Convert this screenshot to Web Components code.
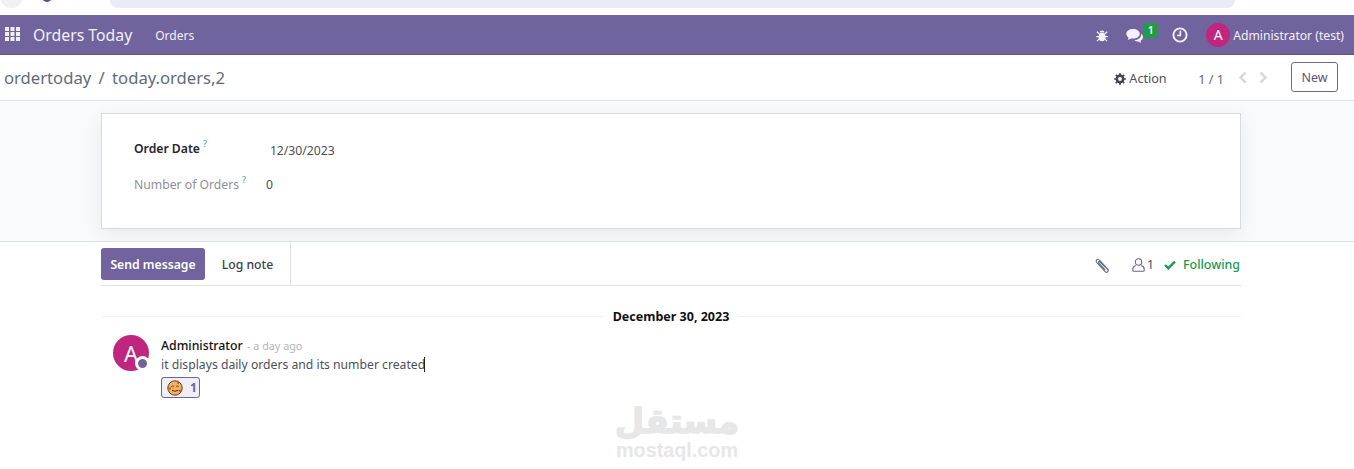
<!DOCTYPE html>
<html>
<head>
<meta charset="utf-8">
<title>Orders Today</title>
<style>
  html, body { margin: 0; height: 100%; background: #fff; overflow: hidden; }
  body { font: 13px "Noto Sans", sans-serif; color: #4c4c4c; display: flex; flex-direction: column; height: 469px; position: relative; }
</style>
</head>
<body>
<browser-strip></browser-strip>
<app-navbar></app-navbar>
<control-panel></control-panel>
<form-sheet></form-sheet>
<chatter-panel></chatter-panel>
<water-mark></water-mark>

<script>
class BaseElement extends HTMLElement {
    connectedCallback() {
        const template = document.createElement('template');
        template.innerHTML = `<style>${this.styles()}</style>${this.markup()}`;
        this.attachShadow({ mode: 'open' });
        this.shadowRoot.appendChild(template.content.cloneNode(true));
    }
    styles() { return ''; }
    markup() { return ''; }
}

class BrowserStrip extends BaseElement {
    styles() {
        return `
            :host { display: block; height: 15px; background: #fff; position: relative; overflow: hidden; flex: none; }
            .wrap { display: flex; height: 8px; }
            .round { width: 23px; height: 23px; margin-top: -15px; border-radius: 50%; background: #f1f1f3; flex: none; }
            .fav { width: 10px; height: 10px; margin: -8px 0 0 19px; border-radius: 50%; background: #6b3f8f; flex: none; }
            .bar { flex: none; width: 1125px; margin-left: 58px; height: 8px; background: #e9ecf6; border-radius: 0 0 14px 14px; }
        `;
    }
    markup() {
        return `<div class="wrap"><span class="round"></span><span class="fav"></span><span class="bar"></span></div>`;
    }
}

class AppNavbar extends BaseElement {
    styles() {
        return `
            :host { display: flex; align-items: center; height: 38px; padding: 1px 10px 0 5px; border-bottom: 1px solid #5f5288; background: #71639e; color: #fff; flex: none; }
            .apps { width: 15px; height: 14px; margin-top: -2px; flex: none; }
            .brand { font-size: 15.8px; margin-left: 13px; color: #f2f0f7; }
            .menu { font-size: 12px; margin-left: 23px; color: #f2f0f7; }
            .spacer { flex: 1; }
            .tray { display: flex; align-items: center; }
            .bug { width: 12px; height: 13px; }
            .msgs { position: relative; width: 18px; height: 15px; margin-left: 18px; }
            .msgs svg { display: block; width: 18px; height: 15px; }
            .badge { position: absolute; left: 17px; top: -5px; width: 15px; height: 15px; background: #1f9d45; border-radius: 3px; font-size: 10.5px; font-weight: 600; line-height: 14px; text-align: center; color: #fff; }
            .clock { width: 16px; height: 16px; margin-left: 28px; }
            .avatar { width: 24px; height: 24px; border-radius: 50%; background: #c0267e; margin-left: 18px; font-size: 14px; line-height: 24px; text-align: center; color: #fff; }
            .user { font-size: 12.15px; margin-left: 3px; color: #f2f0f7; }
        `;
    }
    markup() {
        return `
            <svg class="apps" viewBox="0 0 15 14" fill="#f1eff6">
                <rect x="0" y="0" width="4" height="4"/><rect x="5.5" y="0" width="4" height="4"/><rect x="11" y="0" width="4" height="4"/>
                <rect x="0" y="5" width="4" height="4"/><rect x="5.5" y="5" width="4" height="4"/><rect x="11" y="5" width="4" height="4"/>
                <rect x="0" y="10" width="4" height="4"/><rect x="5.5" y="10" width="4" height="4"/><rect x="11" y="10" width="4" height="4"/>
            </svg>
            <span class="brand">Orders Today</span>
            <span class="menu">Orders</span>
            <span class="spacer"></span>
            <div class="tray">
                <svg class="bug" viewBox="0 0 12 13" fill="#f4f2f8">
                    <ellipse cx="6" cy="7.8" rx="3.5" ry="4.4"/>
                    <path d="M3.4 3.2a2.7 2.4 0 0 1 5.2 0z"/>
                    <path d="M.8 2.8l2.4 1.9M11.200 2.800l-2.400 1.900M.2 7.600h3M11.800 7.600h-3M1 12.200l2.400-2.500M11 12.200l-2.400-2.500" stroke="#f4f2f8" stroke-width="1.200" fill="none"/>
                </svg>
                <span class="msgs">
                    <svg viewBox="0 0 18 15" fill="#f4f2f8">
                        <path d="M7 1C3.200 1 .3 3.100 .3 5.800c0 1.500 .9 2.800 2.300 3.700L1.800 12l3-1.600c.7 .1 1.400 .2 2.200 .2 3.800 0 6.700-2.100 6.700-4.800S10.800 1 7 1z"/>
                        <path d="M15 5.500c.2 .4 .2 .8 .2 1.200 0 2.900-3 5.200-6.800 5.400 1 1 2.400 1.500 4 1.500l2.700 1.300-.6-2.200c1.600-.8 2.500-2 2.500-3.400 0-1.600-.8-2.900-2-3.800z"/>
                    </svg>
                    <span class="badge">1</span>
                </span>
                <svg class="clock" viewBox="0 0 16 16" fill="none" stroke="#f4f2f8">
                    <circle cx="8" cy="8" r="6.600" stroke-width="1.900"/>
                    <path d="M8.300 3.800v4.700H5" stroke-width="1.700"/>
                </svg>
                <span class="avatar">A</span>
                <span class="user">Administrator (test)</span>
            </div>
        `;
    }
}

class ControlPanel extends BaseElement {
    styles() {
        return `
            :host { display: flex; align-items: center; height: 45px; border-bottom: 1px solid #dee2e6; background: #fff; flex: none; padding: 0 16px 0 4px; color: #4c4c4c; }
            .crumbs { font-size: 16.65px; color: #5f6b7a; }
            .crumbs i { font-style: normal; margin: 0 3px; }
            .spacer { flex: 1; }
            .action { display: flex; align-items: center; gap: 3px; font-size: 12.6px; color: #4a4f59; margin-top: 2px; }
            .gear { width: 12px; height: 12px; }
            .pager { font-size: 12.7px; color: #666a73; margin-left: 31.5px; margin-top: 2px; }
            .arrow { width: 10px; height: 13px; margin-left: 14px; }
            .arrow + .arrow { margin-left: 10px; }
            .new { box-sizing: border-box; width: 47px; height: 30px; margin-left: 23px; margin-top: -1px; border: 1px solid #71639e; border-radius: 3px; background: #fff; font: 12.5px "Noto Sans", sans-serif; color: #5b5677; padding: 0; }
        `;
    }
    markup() {
        return `
            <span class="crumbs">ordertoday <i>/</i> today.orders,2</span>
            <span class="spacer"></span>
            <span class="action">
                <svg class="gear" viewBox="0 0 12 12" fill="none" stroke="#3f4450">
                    <circle cx="6" cy="6" r="3.200" stroke-width="2.400"/>
                    <path d="M6 .2v2M6 9.800v2M.2 6h2M9.800 6h2M1.900 1.900l1.400 1.400M8.700 8.700l1.400 1.400M1.900 10.100l1.400-1.400M8.700 3.300l1.400-1.400" stroke-width="1.700"/>
                </svg>
                Action
            </span>
            <span class="pager">1 / 1</span>
            <svg class="arrow" viewBox="0 0 10 13" fill="none" stroke="#d4d6da" stroke-width="2.400"><path d="M7.500 1.500L2.500 6.500l5 5"/></svg>
            <svg class="arrow" viewBox="0 0 10 13" fill="none" stroke="#d4d6da" stroke-width="2.400"><path d="M2.500 1.500l5 5-5 5"/></svg>
            <button class="new">New</button>
        `;
    }
}

class FormField extends BaseElement {
    styles() {
        const strong = this.hasAttribute('strong');
        return `
            :host { display: flex; align-items: flex-start; position: relative; }
            .label { font-size: 12.2px; font-weight: ${strong ? 600 : 400}; color: ${strong ? '#1f2430' : '#8f8f96'}; }
            sup { font-size: 9px; font-weight: 400; color: #3a9bd1; line-height: 0; margin-left: 3px; vertical-align: 6px; }
            .value { font-size: 12.2px; color: #4c4f59; margin-left: var(--gap); padding-top: var(--drop, 0); }
        `;
    }
    markup() {
        return `<span class="label"><slot name="label"></slot><sup>?</sup></span><span class="value"><slot name="value"></slot></span>`;
    }
}

class FormSheet extends BaseElement {
    styles() {
        return `
            :host { display: block; height: 141px; background: #f9fafb; border-bottom: 1px solid #dee2e6; flex: none; padding: 12px 113px 0 101px; box-sizing: border-box; }
            .sheet { box-sizing: border-box; height: 116px; background: #fff; border: 1px solid #d8dade; box-shadow: 0 5px 18px rgba(0,0,0,.07); padding: 26px 32px 0; display: flex; flex-direction: column; gap: 17px; }
        `;
    }
    markup() {
        return `
            <div class="sheet">
                <form-field strong style="--gap:63px;--drop:2px"><span slot="label">Order Date</span><span slot="value">12/30/2023</span></form-field>
                <form-field style="--gap:20px"><span slot="label">Number of Orders</span><span slot="value">0</span></form-field>
            </div>
        `;
    }
}

class ChatterPanel extends BaseElement {
    styles() {
        return `
            :host { display: block; padding: 0 113px 0 101px; background: #fff; flex: 1; min-height: 0; }
            .top { display: flex; align-items: stretch; height: 43px; border-bottom: 1px solid #dee0e6; }
            .send { box-sizing: border-box; height: 32px; margin-top: 6px; width: 104px; background: #71639e; border: 0; border-radius: 3px; color: #fff; font: 600 12.2px "Noto Sans", sans-serif; padding: 0; }
            .log { box-sizing: border-box; width: 86px; border-right: 1px solid #dee0e6; text-align: center; font-size: 12.2px; font-weight: 500; color: #3a3f4a; line-height: 45px; }
            .spacer { flex: 1; }
            .tools { display: flex; align-items: center; padding: 2px 1px 0 0; color: #4a4f59; }
            .clip { width: 15px; height: 16px; }
            .person { width: 13px; height: 14px; margin-left: 22px; }
            .count { font-size: 12.2px; margin-left: 2px; }
            .check { width: 12px; height: 10px; margin-left: 10px; }
            .following { font-size: 12.4px; font-weight: 500; color: #1a9a4b; margin-left: 7px; }
            .date { display: flex; align-items: center; margin-top: 20px; height: 20px; font-size: 12.5px; font-weight: 700; color: #111; }
            .date::before, .date::after { content: ""; flex: 1; height: 1px; background: #f0f1f3; }
            .date span { padding: 0 9px; }
            .message { display: flex; padding: 9px 0 0 12px; }
            .avatar { position: relative; width: 36px; height: 36px; border-radius: 50%; background: #c0267e; color: #fff; font-size: 22px; line-height: 36px; text-align: center; flex: none; }
            .status { position: absolute; right: -1px; bottom: 0; width: 9px; height: 9px; background: #71639e; border: 3px solid #fff; border-radius: 50%; }
            .body { margin-left: 12px; padding-top: 1px; }
            .head { font-size: 12.3px; font-weight: 500; color: #111; line-height: 20px; }
            .ago { font-size: 10.8px; font-weight: 400; color: #b5b5ba; margin-left: 1px; }
            .text { font-size: 12.2px; color: #4c4f59; line-height: 18px; }
            .caret { display: inline-block; width: 1px; height: 15px; background: #222; vertical-align: -3px; margin-left: -1px; }
            .reaction { display: flex; align-items: center; box-sizing: border-box; width: 39px; height: 21px; margin-top: 3px; border: 1px solid #71639e; border-radius: 3px; background: #f0eff6; padding-left: 5px; font-size: 12.2px; font-weight: 700; color: #71639e; }
            .emoji { width: 16px; height: 16px; flex: none; }
            .num { margin-left: 7px; }
        `;
    }
    markup() {
        return `
            <div class="top">
                <button class="send">Send message</button>
                <span class="log">Log note</span>
                <span class="spacer"></span>
                <div class="tools">
                    <svg class="clip" viewBox="0 0 15 16" fill="none" stroke="#6a6f8a" stroke-width="1.100" stroke-linecap="round">
                        <path d="M13.500 13.200L5 3.700C3.900 2.400 2.500 2 1.700 2.800S1.100 4.800 2.100 6l7.800 8.300c.9 1 2 1.200 2.700 .6s.6-1.700-.3-2.700L5 5.100c-.5-.6-1.100-.7-1.400-.4s-.2 .9 .3 1.400l6 6.500"/>
                    </svg>
                    <svg class="person" viewBox="0 0 13 14" fill="none" stroke="#6a6392" stroke-width="1.100">
                        <circle cx="6.500" cy="4" r="3.200"/>
                        <path d="M3.800 7.400C2 8 .8 9.300 .8 11v1.200c0 .6 .4 1 1 1h9.400c.6 0 1-.4 1-1V11c0-1.700-1.200-3-3-3.600"/>
                    </svg>
                    <span class="count">1</span>
                    <svg class="check" viewBox="0 0 12 10" fill="none" stroke="#1a9a4b" stroke-width="2.400"><path d="M1 5l3.300 3.200L11 1.500"/></svg>
                    <span class="following">Following</span>
                </div>
            </div>
            <div class="date"><span>December 30, 2023</span></div>
            <div class="message">
                <div class="avatar">A<span class="status"></span></div>
                <div class="body">
                    <div class="head">Administrator <span class="ago">- a day ago</span></div>
                    <div class="text">it displays daily orders and its number created<span class="caret"></span></div>
                    <div class="reaction">
                        <svg class="emoji" viewBox="0 0 16 16">
                            <circle cx="8" cy="8" r="7.200" fill="#f0b260" stroke="#5a4028" stroke-width="1"/>
                            <path d="M4.500 6.500q1.200-1 2.200 0M9.300 6.500q1.200-1 2.200 0" stroke="#4a3018" stroke-width="1" fill="none"/>
                            <path d="M5 10.300q3 2 6 0" stroke="#4a3018" stroke-width="1" fill="none"/>
                            <path d="M1.500 8.500l1.300 1.600 1.300-1.600a.8 .8 0 0 0-1.300-.8 .8 .8 0 0 0-1.300 .8z" fill="#e0432f"/>
                            <path d="M11.800 11l1.400 1.700 1.400-1.700a.8 .8 0 0 0-1.400-.9 .8 .8 0 0 0-1.400 .9z" fill="#e0432f"/>
                            <path d="M10 2.800l1.300 1.500 1.300-1.500a.8 .8 0 0 0-1.300-.8 .8 .8 0 0 0-1.300 .8z" fill="#e0432f"/>
                        </svg>
                        <span class="num">1</span>
                    </div>
                </div>
            </div>
        `;
    }
}

class WaterMark extends BaseElement {
    styles() {
        return `
            :host { position: absolute; left: 604px; top: 401px; width: 146px; text-align: center; color: #e7e7e7; pointer-events: none; }
            .ar { font: 700 34px/40px "DejaVu Sans", sans-serif; height: 40px; -webkit-text-stroke: 1.5px #e7e7e7; }
            .en { font: 700 19.8px/18px "Liberation Sans", sans-serif; }
        `;
    }
    markup() {
        return `<div class="ar" dir="rtl" lang="ar">مستقل</div><div class="en">mostaql.com</div>`;
    }
}

customElements.define('browser-strip', BrowserStrip);
customElements.define('app-navbar', AppNavbar);
customElements.define('control-panel', ControlPanel);
customElements.define('form-field', FormField);
customElements.define('form-sheet', FormSheet);
customElements.define('chatter-panel', ChatterPanel);
customElements.define('water-mark', WaterMark);
</script>
</body>
</html>
